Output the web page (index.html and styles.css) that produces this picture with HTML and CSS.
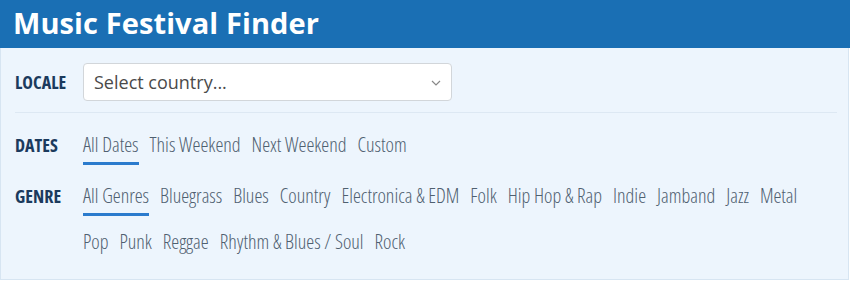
FILE: index.html
```html
<!DOCTYPE html>
<html lang="en">
<head>
<meta charset="utf-8">
<title>Music Festival Finder</title>
<link rel="stylesheet" href="styles.css">
</head>
<body>
<div class="app">
  <header class="app-header">
    <h1 class="app-title">Music Festival Finder</h1>
  </header>
  <section class="panel">
    <div class="filter-row locale-row">
      <span class="filter-label">LOCALE</span>
      <div class="select">
        <span class="select-text">Select country...</span>
        <svg class="chevron" width="10" height="6" viewBox="0 0 10 6"><path d="M1 1l4 4 4-4" fill="none" stroke="#888" stroke-width="1.2"/></svg>
      </div>
    </div>
    <hr class="divider">
    <div class="filter-row dates-row">
      <span class="filter-label">DATES</span>
      <div class="options">
        <span class="option active">All Dates</span>
        <span class="option">This Weekend</span>
        <span class="option">Next Weekend</span>
        <span class="option">Custom</span>
      </div>
    </div>
    <div class="filter-row genre-row">
      <span class="filter-label">GENRE</span>
      <div class="options">
        <span class="option active">All Genres</span>
        <span class="option">Bluegrass</span>
        <span class="option">Blues</span>
        <span class="option">Country</span>
        <span class="option">Electronica &amp; EDM</span>
        <span class="option">Folk</span>
        <span class="option">Hip Hop &amp; Rap</span>
        <span class="option">Indie</span>
        <span class="option">Jamband</span>
        <span class="option">Jazz</span>
        <span class="option">Metal</span>
        <span class="option">Pop</span>
        <span class="option">Punk</span>
        <span class="option">Reggae</span>
        <span class="option">Rhythm &amp; Blues / Soul</span>
        <span class="option">Rock</span>
      </div>
    </div>
  </section>
</div>
</body>
</html>
```

FILE: styles.css
```css
html, body {
  margin: 0;
  padding: 0;
  background: #ffffff;
}

.app {
  width: 850px;
  font-family: "Open Sans", "Liberation Sans", sans-serif;
}

.app-header {
  background: #1a6fb4;
  height: 46px;
  padding-bottom: 2px;
}

.app-title {
  margin: 0;
  padding-left: 13px;
  font-size: 29px;
  font-weight: 700;
  letter-spacing: 0.1px;
  line-height: 46px;
  color: #ffffff;
}

.panel {
  width: 822px;
  background: #edf5fd;
  border: 1px solid #d7e5f2;
  border-top: none;
  padding: 15px 11px 17px 14px;
}

.filter-row {
  display: flex;
  align-items: baseline;
}

.locale-row {
  align-items: center;
}

.filter-label {
  width: 68px;
  flex: none;
  font-stretch: 75%;
  font-weight: 700;
  font-size: 18px;
  color: #1b3a5d;
}

.select {
  height: 36px;
  background: #ffffff;
  border: 1px solid #d2d6da;
  border-radius: 4px;
  display: flex;
  align-items: center;
  justify-content: space-between;
  padding: 0 10px 0 10px;
  box-sizing: content-box;
  width: 347px;
}

.select-text {
  font-size: 18px;
  color: #4a4a4a;
}

.chevron {
  display: block;
  margin-top: 2px;
}

.divider {
  border: none;
  border-top: 1px solid #dde8f3;
  margin: 11px 0 19px 0;
  height: 0;
}

.options {
  display: flex;
  flex-wrap: wrap;
  column-gap: 11px;
  row-gap: 13px;
  padding-right: 30px;
}

.option {
  font-stretch: 75%;
  font-weight: 300;
  font-size: 20px;
  line-height: 26px;
  color: #4f6070;
  padding-bottom: 4px;
  border-bottom: 3px solid transparent;
}

.option.active {
  border-bottom-color: #2b7bcd;
}

.dates-row {
  margin-bottom: 18px;
}
```
